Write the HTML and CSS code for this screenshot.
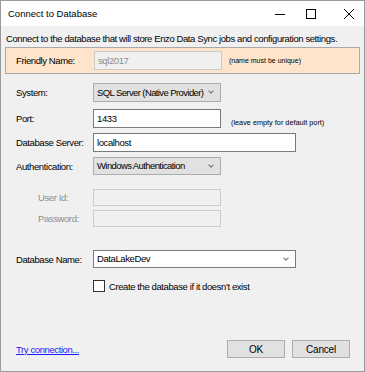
FILE: index.html
```html
<!DOCTYPE html>
<html lang="en">
  <head>
    <meta charset="UTF-8" />
    <meta name="viewport" content="width=device-width, initial-scale=1.0" />
    <title>Connect to Database</title>
    <link rel="stylesheet" href="styles.css">
  </head>
  <body>
    <div class="window">
      <header class="titlebar">
        <span class="title">Connect to Database</span>
        <div class="controls">
          <svg class="min" width="10" height="10" viewBox="0 0 10 10"><path d="M0 5.5h10" stroke="#000" stroke-width="1" /></svg>
          <svg class="max" width="10" height="10" viewBox="0 0 10 10"><rect x="0.5" y="0.5" width="9" height="9" fill="none" stroke="#000" stroke-width="1" /></svg>
          <svg class="close" width="10" height="10" viewBox="0 0 10 10"><path d="M0 0L10 10M10 0L0 10" stroke="#000" stroke-width="1" /></svg>
        </div>
      </header>

      <p class="intro">Connect to the database that will store Enzo Data Sync jobs and configuration settings.</p>

      <div class="panel">
        <label>Friendly Name:</label>
        <div class="box short disabled faded">sql2017</div>
        <span class="note">(name must be unique)</span>
      </div>

      <div class="row system">
        <label>System:</label>
        <div class="box short select">SQL Server (Native Provider)<span class="chev"></span></div>
      </div>

      <div class="row port">
        <label>Port:</label>
        <div class="box short">1433</div>
        <span class="note low">(leave empty for default port)</span>
      </div>

      <div class="row server">
        <label>Database Server:</label>
        <div class="box long">localhost</div>
      </div>

      <div class="row auth">
        <label>Authentication:</label>
        <div class="box short select">Windows Authentication<span class="chev"></span></div>
      </div>

      <div class="row user">
        <label class="indent">User Id:</label>
        <div class="box short disabled"></div>
      </div>

      <div class="row pass">
        <label class="indent">Password:</label>
        <div class="box short disabled"></div>
      </div>

      <div class="row dbname">
        <label>Database Name:</label>
        <div class="box long combo">DataLakeDev<span class="chev"></span></div>
      </div>

      <div class="row check">
        <span class="checkbox"></span>
        <span>Create the database if it doesn't exist</span>
      </div>

      <footer class="footer">
        <a href="#" class="link">Try connection...</a>
        <div class="buttons">
          <button>OK</button>
          <button>Cancel</button>
        </div>
      </footer>
    </div>
  </body>
</html>
```

FILE: styles.css
```css
* {
  box-sizing: border-box;
}

body {
  margin: 0;
  font-family: "Liberation Sans", Arial, sans-serif;
  font-size: 9.5px;
  letter-spacing: -0.4px;
  color: #000;
}

.window {
  width: 365px;
  height: 372px;
  border: 1px solid #9a9a9a;
  background-color: #f0f0f0;
  display: flex;
  flex-direction: column;
}

.titlebar {
  height: 25px;
  background-color: #fff;
  display: flex;
  align-items: center;
  justify-content: space-between;
  padding-left: 7px;
}

.title {
  font-size: 9.5px;
  letter-spacing: 0;
}

.controls {
  display: flex;
  align-items: center;
  padding-right: 10px;
}

.controls .min {
  margin-right: 21px;
}

.controls .max {
  margin-right: 28px;
}

.intro {
  margin: 6px 0 0 5px;
  line-height: 14px;
  white-space: nowrap;
}

.panel {
  margin: 1px 4px 0 4px;
  height: 27px;
  border: 1px solid #a9a9a9;
  background-color: #fde4ca;
  display: flex;
  align-items: center;
  padding-left: 10px;
}

.panel label {
  width: 78px;
}

.row {
  display: flex;
  align-items: center;
  padding-left: 15px;
}

.row label {
  width: 77px;
  white-space: nowrap;
}

.row label.indent {
  padding-left: 22px;
  color: #8d8d8d;
}

.box {
  height: 19px;
  border: 1px solid #7a7a7a;
  background-color: #fff;
  padding: 0 0 0 3px;
  line-height: 17px;
  position: relative;
  white-space: nowrap;
}

.short {
  width: 128px;
}

.long {
  width: 203px;
}

.disabled {
  background-color: #f0f0f0;
  border-color: #cccccc;
}

.faded {
  color: #8d8d8d;
}

.select {
  background-color: #e1e1e1;
  border-color: #adadad;
  letter-spacing: -0.6px;
}

.chev {
  position: absolute;
  right: 7px;
  top: 5px;
  width: 4px;
  height: 4px;
  border-right: 1px solid #707070;
  border-bottom: 1px solid #707070;
  transform: rotate(45deg);
}

.note {
  font-size: 7px;
  letter-spacing: 0;
  margin-left: 7px;
}

.note.low {
  font-size: 7.3px;
  align-self: flex-end;
  margin-left: 10px;
  margin-bottom: 1px;
}

.system {
  margin-top: 9px;
}

.port {
  margin-top: 7px;
}

.server {
  margin-top: 5px;
}

.auth {
  margin-top: 5px;
}

.auth .box {
  height: 18px;
  line-height: 16px;
}

.user {
  margin-top: 14px;
}

.pass {
  margin-top: 4px;
}

.user .box,
.pass .box {
  height: 17px;
}

.dbname {
  margin-top: 23px;
}

.dbname .box {
  height: 18px;
  line-height: 16px;
}

.check {
  margin-top: 12px;
  padding-left: 92px;
}

.checkbox {
  width: 12px;
  height: 12px;
  border: 1px solid #333;
  background-color: #fff;
  margin-right: 4px;
}

.footer {
  margin-top: auto;
  padding: 0 14px 13px 15px;
  display: flex;
  align-items: center;
  justify-content: space-between;
}

.link {
  color: #1a1aff;
  text-decoration: underline;
}

.buttons {
  display: flex;
  gap: 7px;
}

.buttons button {
  width: 58px;
  height: 18px;
  border: 1px solid #adadad;
  background-color: #e1e1e1;
  font-family: inherit;
  font-size: 10px;
  letter-spacing: -0.2px;
  padding: 0;
}
```
